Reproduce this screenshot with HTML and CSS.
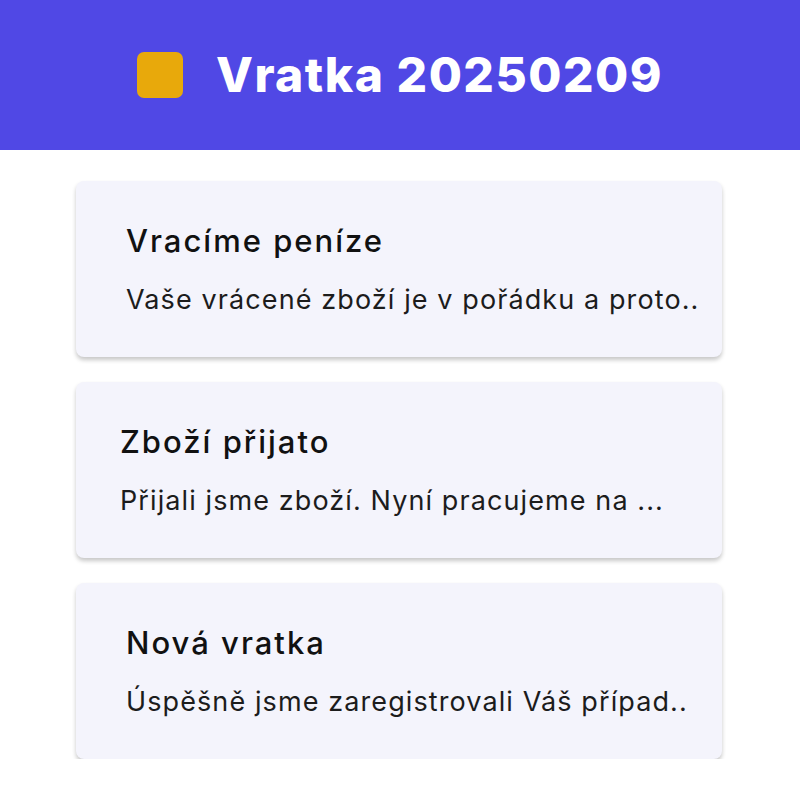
FILE: index.html
```html
<!DOCTYPE html>
<html lang="cs">
<head>
<meta charset="utf-8">
<link rel="stylesheet" href="styles.css">
</head>
<body>
<header class="header">
  <span class="badge"></span>
  <h1 class="title">Vratka 20250209</h1>
</header>
<main class="list">
  <section class="card card--wide">
    <h2 class="card-title">Vracíme peníze</h2>
    <p class="card-text">Vaše vrácené zboží je v pořádku a proto..</p>
  </section>
  <section class="card">
    <h2 class="card-title">Zboží přijato</h2>
    <p class="card-text">Přijali jsme zboží. Nyní pracujeme na ...</p>
  </section>
  <section class="card card--wide">
    <h2 class="card-title">Nová vratka</h2>
    <p class="card-text">Úspěšně jsme zaregistrovali Váš případ..</p>
  </section>
</main>
</body>
</html>
```

FILE: styles.css
```css
html, body {
  margin: 0;
  padding: 0;
  background: #ffffff;
  font-family: Inter, "Liberation Sans", sans-serif;
}
.header {
  height: 150px;
  background: #5048e5;
  display: flex;
  align-items: center;
  justify-content: center;
  gap: 33px;
}
.badge {
  width: 46px;
  height: 46px;
  border-radius: 7px;
  background: #e8a90b;
  flex: none;
}
.title {
  margin: 0;
  color: #ffffff;
  font-size: 48px;
  font-weight: 800;
  line-height: 1;
  letter-spacing: 1.5px;
}
.list {
  display: flex;
  flex-direction: column;
  gap: 25px;
  padding: 31px 78px 0 76px;
}
.card {
  background: #f4f4fc;
  border-radius: 8px;
  box-shadow: 0 3px 4px rgba(0, 0, 0, 0.22);
  padding: 41px 44px 41px 44px;
}
.card--wide {
  padding-left: 50px;
}
.card-title {
  margin: 0;
  font-size: 31px;
  line-height: 37px;
  font-weight: 500;
  letter-spacing: 2px;
  color: #111111;
}
.card-text {
  margin: 25px 0 0 0;
  font-size: 27px;
  line-height: 32px;
  font-weight: 400;
  letter-spacing: 1.1px;
  color: #1c1c1c;
  white-space: nowrap;
}
```
